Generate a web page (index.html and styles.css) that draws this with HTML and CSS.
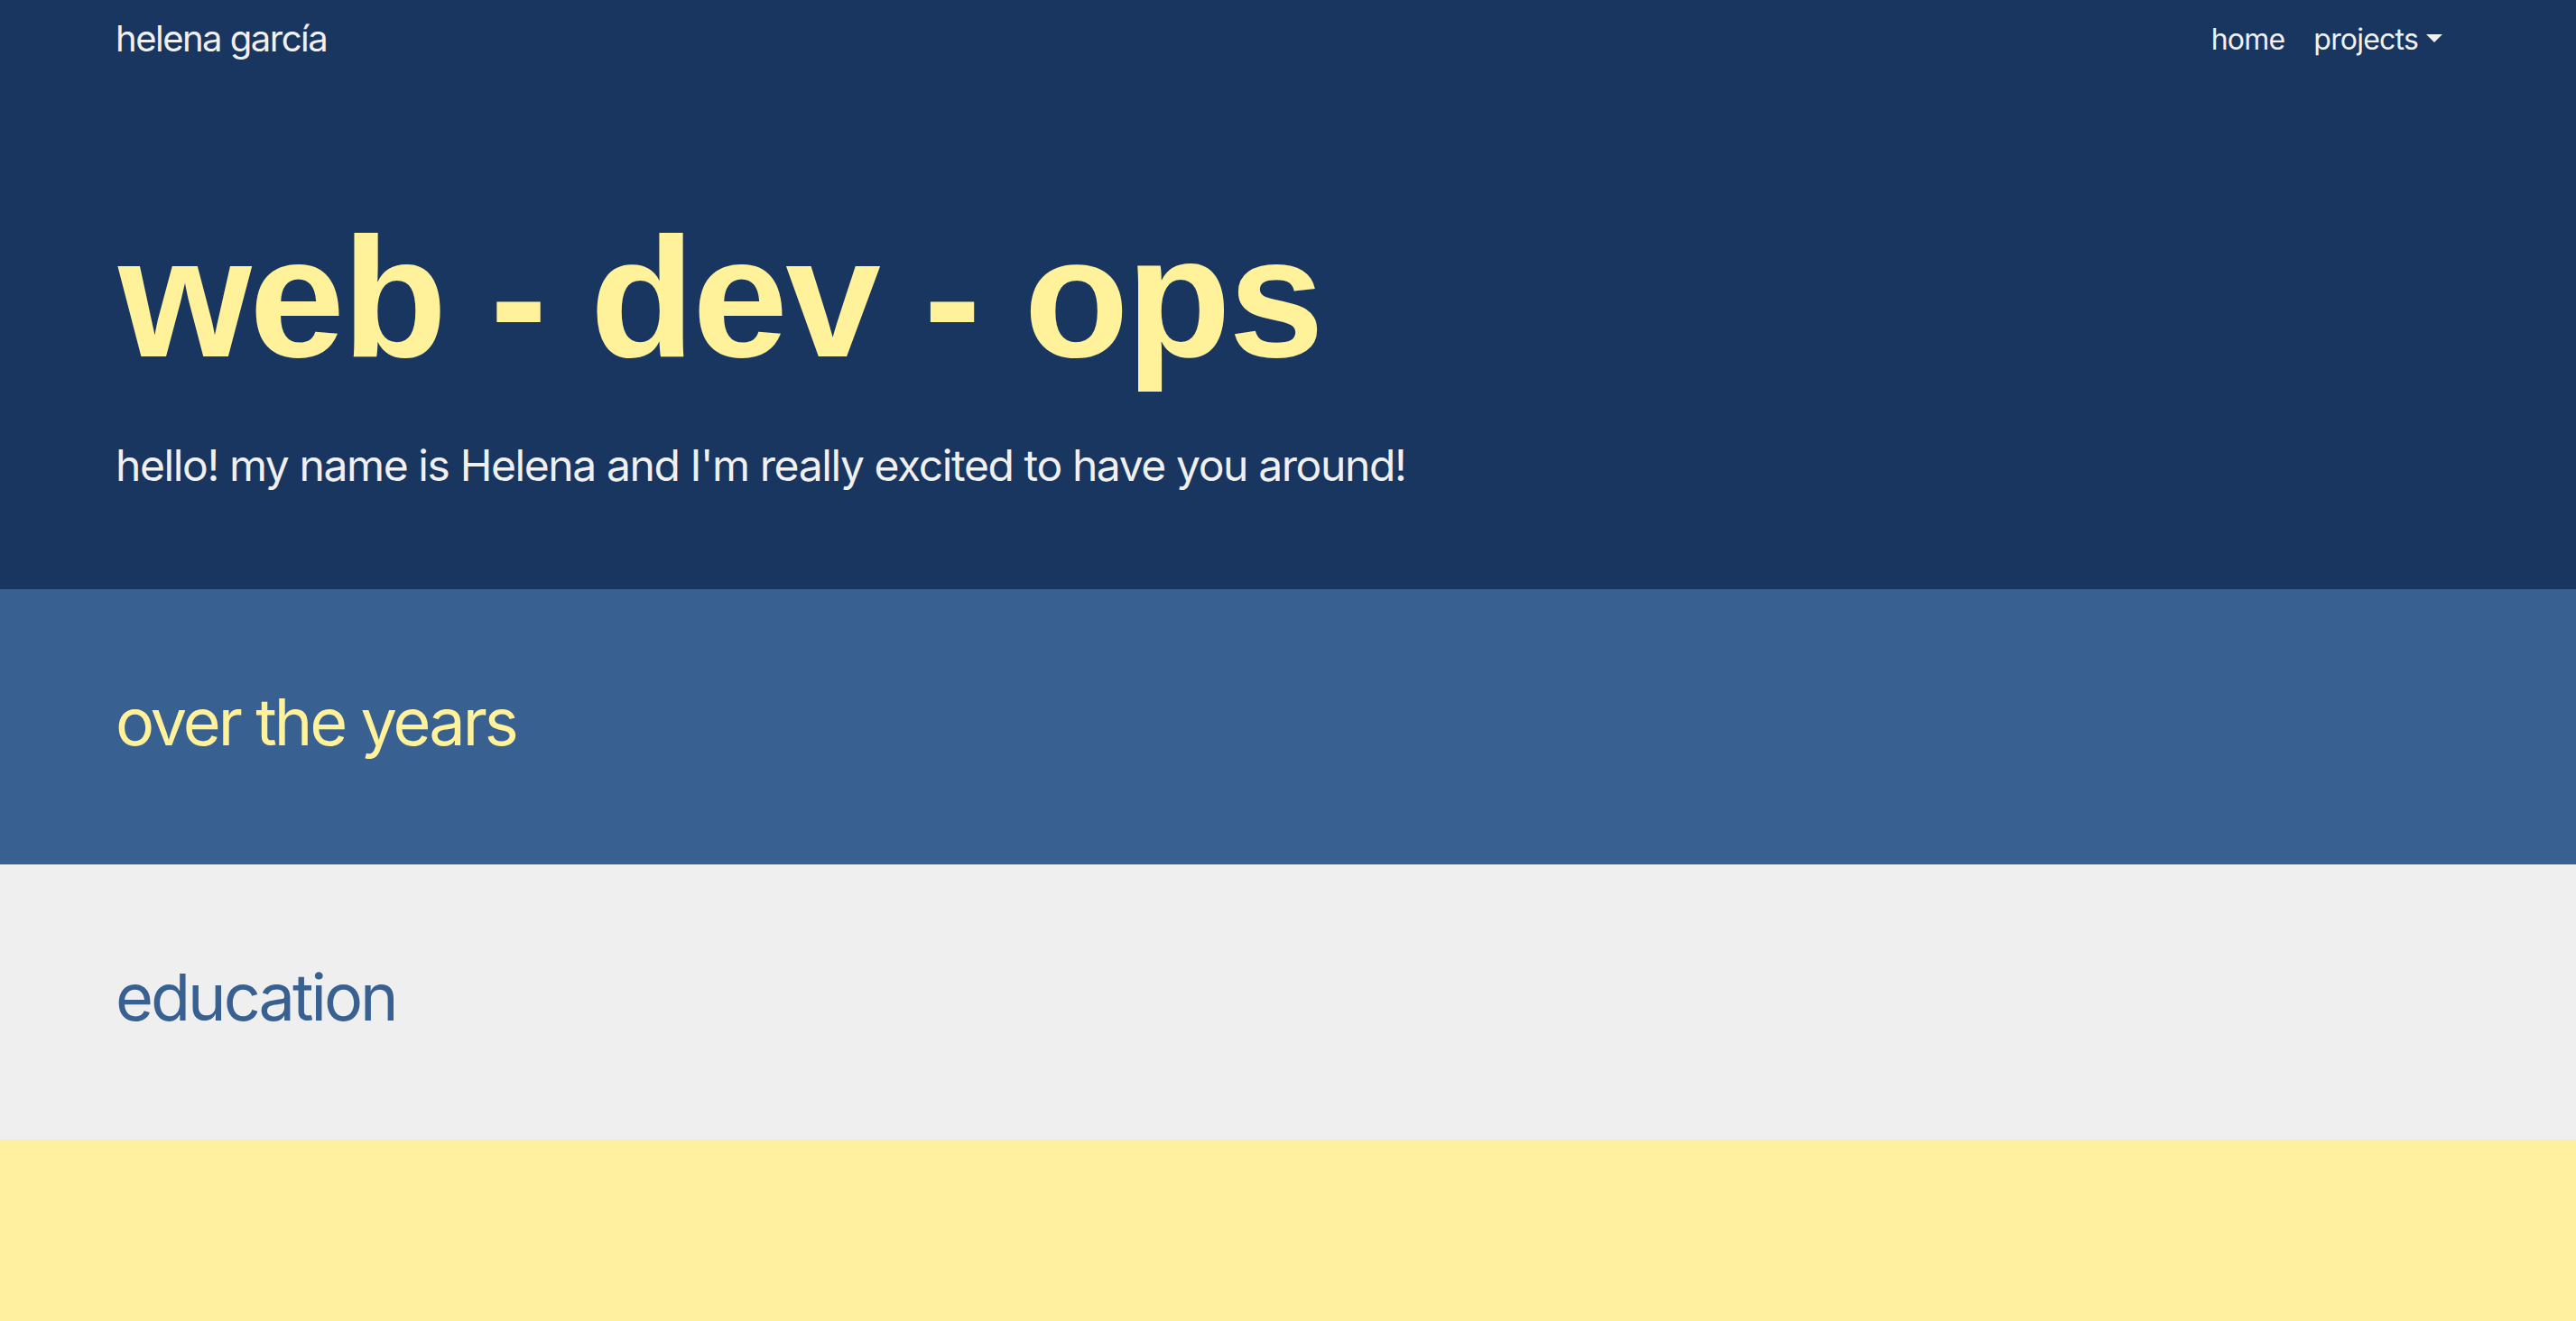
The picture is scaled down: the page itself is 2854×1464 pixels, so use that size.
FILE: index.html
```html
<!DOCTYPE html>
<html lang="en">
<head>
<meta charset="utf-8">
<title>helena garcía</title>
<link rel="stylesheet" href="styles.css">
</head>
<body>
<header class="hero">
  <nav class="navbar">
    <a class="brand" href="#">helena garcía</a>
    <ul class="nav-links">
      <li><a class="nav-link" href="#">home</a></li>
      <li><a class="nav-link dropdown-toggle" href="#">projects</a></li>
    </ul>
  </nav>
  <div class="hero-body">
    <h1 class="hero-title">web - dev - ops</h1>
    <p class="hero-lead">hello! my name is Helena and I'm really excited to have you around!</p>
  </div>
</header>
<section class="band band-blue">
  <h2 class="band-title">over the years</h2>
</section>
<section class="band band-grey">
  <h2 class="band-title">education</h2>
</section>
<section class="band band-yellow">
</section>
</body>
</html>
```

FILE: styles.css
```css
* { box-sizing: border-box; }
html, body { margin: 0; padding: 0; }
body {
  font-family: Inter, "Noto Sans", "Liberation Sans", sans-serif;
  background: #fff0a0;
  color: #f0f0f0;
}
a { text-decoration: none; color: inherit; }

.hero {
  background: #193660;
  padding: 0 128px 101px;
}
.navbar {
  display: flex;
  justify-content: space-between;
  align-items: center;
  height: 88px;
}
.brand {
  font-size: 40px;
  line-height: 60px;
  color: #f0f0f0;
  margin-top: -3px;
  letter-spacing: -1.5px;
}
.nav-links {
  list-style: none;
  display: flex;
  margin: 0;
  padding: 0;
  margin-right: 4px;
  margin-top: 0;
}
.nav-link {
  display: block;
  padding: 8px 16px;
  font-size: 32px;
  line-height: 48px;
  color: #f0f0f0;
  letter-spacing: -0.8px;
}
.dropdown-toggle::after {
  content: "";
  display: inline-block;
  margin-left: 9px;
  vertical-align: 8px;
  border-top: 9px solid #f0f0f0;
  border-left: 9px solid transparent;
  border-right: 9px solid transparent;
}
.hero-body {
  padding-top: 146px;
}
.hero-title {
  margin: 0 0 0 3px;
  font-family: "Liberation Sans", Arial, sans-serif;
  font-weight: 700;
  font-size: 190px;
  line-height: 190px;
  letter-spacing: -2.6px;
  color: #fff29a;
}
.hero-lead {
  margin: 56px 0 0;
  font-size: 48px;
  line-height: 72px;
  color: #f0f0f0;
  letter-spacing: -1.4px;
}

.band {
  padding: 104px 128px 115px;
}
.band-title {
  margin: 0;
  font-weight: 400;
  font-size: 72px;
  line-height: 86px;
  letter-spacing: -3px;
}
.band-blue { background: #386091; color: #fff29a; }
.band-grey { background: #efefef; color: #386091; }
.band-yellow { background: #fff0a0; min-height: 400px; }
```
